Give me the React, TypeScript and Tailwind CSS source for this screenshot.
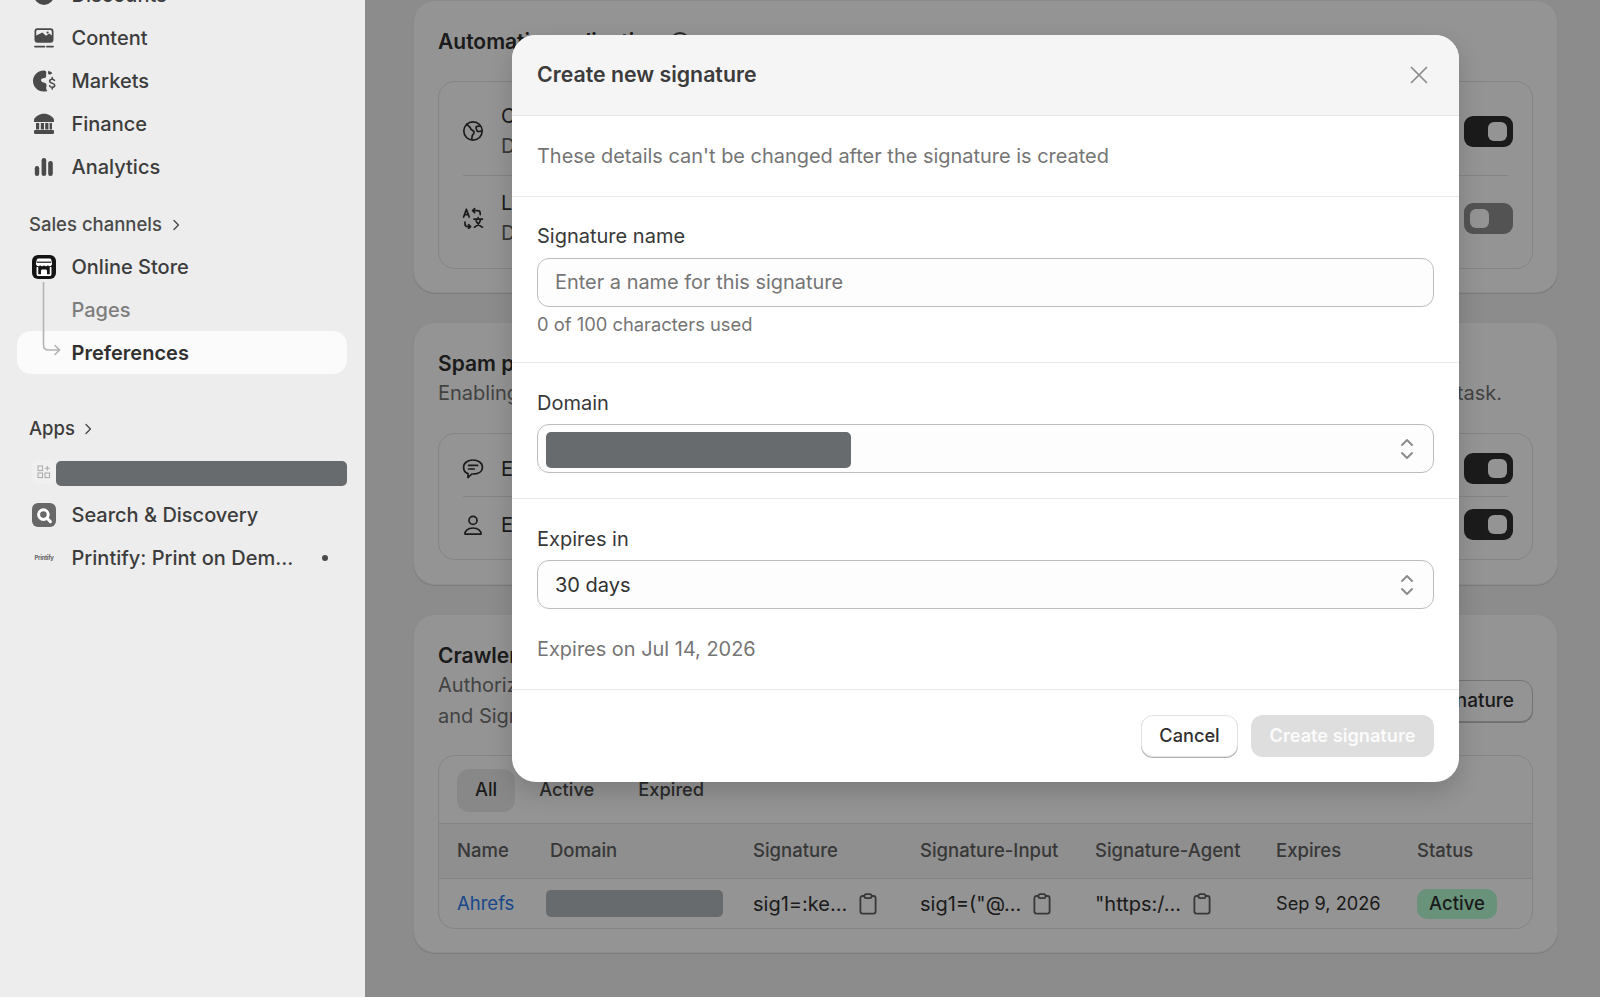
const redacted = 'bg-[#686b6d] rounded-[5px]'

function ContentIcon() {
  return (
    <svg viewBox="0 0 22 22" className="w-[22px] h-[22px]" fill="none">
      <rect x="1.5" y="1.2" width="19" height="14.6" rx="3" fill="#4a4a4a" />
      <path d="M3.2 8.6V4.6c0-1 .7-1.7 1.7-1.7h12.2c1 0 1.7.7 1.7 1.7v3.9l-2.6-1.9-3.2 2.2-3.6-3.3z" fill="#ededed" />
      <circle cx="14.6" cy="5.6" r="1.1" fill="#4a4a4a" />
      <path d="M2 19.6h9.5M14 19.6h6" stroke="#4a4a4a" strokeWidth="1.8" strokeLinecap="round" />
    </svg>
  )
}

function MarketsIcon() {
  return (
    <svg viewBox="0 0 24 24" className="w-[24px] h-[24px]" fill="none">
      <path d="M12.5 1.4C6.4 1 1.2 5.6 1 11.6c-.2 6.2 4.6 11 10.8 11 1.6 0 2.6-.2 3.6-.6-1.2-1.4-1.5-3-1-4.6.3-1 .3-2.4-.8-3.2-1.2-.9-3.2-.7-4.2-2-.8-1-.3-2.4.9-2.8 1.3-.5 3-.1 3.7-1.4.6-1.2-.3-2.2.2-3.4.2-.6.3-2-.7-2.6z" fill="#4a4a4a" />
      <path d="M16.5 1.8c1.4.4 2.8 1.2 3.8 2.4-1 .8-2 1.4-3 1.4-1.4 0-1.6-2.4-.8-3.8z" fill="#4a4a4a" />
      <path d="M22.4 11.4c-.4-.8-1.2-1.2-2.2-1.2-1.4 0-2.5.8-2.5 2 0 2.6 5 1.4 5 4 0 1.2-1.2 2-2.6 2-1.1 0-2.1-.5-2.5-1.4M20.2 8.6v1.6M20.2 18.2v1.8" stroke="#4a4a4a" strokeWidth="1.6" strokeLinecap="round" />
    </svg>
  )
}

function FinanceIcon() {
  return (
    <svg viewBox="0 0 22 22" className="w-[22px] h-[22px]" fill="none">
      <path d="M11 .8C6.5.8 2.6 3.2 1 6.6V9h20V6.6C19.4 3.2 15.5.8 11 .8z" fill="#4a4a4a" />
      <path d="M3 10h3.2v6.6H3zM7.8 10H11v6.6H7.8zM12.2 10h3.2v6.6h-3.2zM16.6 10H19v6.6h-2.4z" fill="#4a4a4a" />
      <rect x="1" y="17" width="20" height="4" rx="1.2" fill="#4a4a4a" />
    </svg>
  )
}

function AnalyticsIcon() {
  return (
    <svg viewBox="0 0 22 22" className="w-[22px] h-[22px]" fill="#4a4a4a">
      <rect x="1.8" y="10" width="4.4" height="10" rx="2.2" />
      <rect x="8.6" y="2" width="4.6" height="18" rx="2.3" />
      <rect x="15.2" y="5" width="4.6" height="15" rx="2.2" />
    </svg>
  )
}

function StoreIcon() {
  return (
    <svg viewBox="0 0 24 24" className="w-[24px] h-[24px]" fill="none">
      <rect width="24" height="24" rx="6" fill="#141414" />
      <path d="M6.5 3.6h11c1 0 1.7.6 1.9 1.5l.7 3.5c.2 1.4-.9 2.6-2.3 2.6-.8 0-1.5-.4-1.9-1-.4.6-1.1 1-1.9 1s-1.5-.4-2-1c-.4.6-1.1 1-1.9 1s-1.5-.4-1.9-1c-.4.6-1.1 1-1.9 1-1.4 0-2.5-1.2-2.3-2.6l.7-3.5c.2-.9.9-1.5 1.8-1.5z" fill="#fff" />
      <path d="M4.8 7.2h14.4" stroke="#141414" strokeWidth="1.2" />
      <path d="M5.4 12v7.2c0 .6.4 1 1 1h11.2c.6 0 1-.4 1-1V12" stroke="#fff" strokeWidth="1.7" />
      <path d="M9 20v-4.2c0-.8.6-1.4 1.4-1.4h3.2c.8 0 1.4.6 1.4 1.4V20" fill="#fff" />
    </svg>
  )
}

function SearchAppIcon() {
  return (
    <svg viewBox="0 0 24 24" className="w-[24px] h-[24px]" fill="none">
      <rect width="24" height="24" rx="6" fill="#686868" />
      <circle cx="11.4" cy="11.6" r="4.8" stroke="#fff" strokeWidth="3" />
      <path d="M15 15.2l3.4 3.4" stroke="#fff" strokeWidth="3" strokeLinecap="round" />
    </svg>
  )
}

function AppsIcon() {
  return (
    <div className="w-[24px] h-[24px] rounded-[5px] bg-[#f0f0f0] flex items-center justify-center">
      <svg viewBox="0 0 14 14" className="w-[14px] h-[14px]" fill="none" stroke="#a8a8a8" strokeWidth="1">
        <rect x="1" y="1" width="4.6" height="4.6" />
        <rect x="1" y="8" width="4.6" height="4.6" />
        <rect x="8" y="8" width="4.6" height="4.6" />
        <path d="M10.3 1v4.6M8 3.3h4.6" />
      </svg>
    </div>
  )
}

function Chevron() {
  return (
    <svg viewBox="0 0 10 12" className="w-[10px] h-[12px]" fill="none" stroke="#4a4a4a" strokeWidth="1.4" strokeLinecap="round" strokeLinejoin="round">
      <path d="M3 1.6 7.4 6 3 10.4" />
    </svg>
  )
}

function UpDown() {
  return (
    <svg viewBox="0 0 14 24" className="w-[14px] h-[24px]" fill="none" stroke="#8a8a8a" strokeWidth="1.9" strokeLinecap="round" strokeLinejoin="round">
      <path d="M2 8 7 3l5 5M2 16l5 5 5-5" />
    </svg>
  )
}

function NavRow({ icon, label, className = '' }: { icon?: React.ReactNode; label: string; className?: string }) {
  return (
    <div className={`h-[43px] flex items-center px-[15px] ${className}`}>
      <div className="w-[24px] flex justify-center shrink-0">{icon}</div>
      <span className="ml-[15.5px] text-[20px] font-[500] text-[#3c3c3c] whitespace-nowrap">{label}</span>
    </div>
  )
}

function Sidebar() {
  return (
    <aside className="w-[365px] shrink-0 h-full overflow-hidden bg-[#ededed] pl-[17px] pr-[18px]">
      <div className="-mt-[27px]">
        <NavRow label="Discounts" icon={<div className="w-[20px] h-[20px] rounded-full bg-[#4a4a4a]" />} />
        <NavRow label="Content" icon={<ContentIcon />} />
        <NavRow label="Markets" icon={<MarketsIcon />} />
        <NavRow label="Finance" icon={<FinanceIcon />} />
        <NavRow label="Analytics" icon={<AnalyticsIcon />} />
      </div>

      <div className="mt-[16px] h-[41px] flex items-center gap-[9px] px-[12px] text-[18.5px] font-[500] text-[#4a4a4a]">
        <span>Sales channels</span>
        <Chevron />
      </div>

      <div className="relative">
        <NavRow label="Online Store" icon={<StoreIcon />} />
        <div className="h-[43px] flex items-center pl-[54.5px] text-[20px] font-[500] text-[#7d7d7d]">Pages</div>
        <div className="h-[43px] flex items-center pl-[54.5px] text-[20px] font-[580] text-[#303030] bg-[#fbfbfb] rounded-[14px]">Preferences</div>
        {/* line from store icon down to the selected item */}
        <svg className="absolute left-[25px] top-[37px] w-[22px] h-[76px]" viewBox="0 0 22 76" fill="none" stroke="#b4b4b4" strokeWidth="1.6" strokeLinecap="round" strokeLinejoin="round">
          <path d="M1.5 0v63c0 3 2 5 5 5h11M13 63.5l4.6 4.5-4.6 4.5" />
        </svg>
      </div>

      <div className="mt-[33px] h-[43px] flex items-center gap-[8px] px-[12px] text-[18.5px] font-[500] text-[#3c3c3c]">
        <span>Apps</span>
        <Chevron />
      </div>

      <div className="h-[43px] flex items-center pl-[15px]">
        <AppsIcon />
        <div className={`flex-1 h-[25px] mt-[4px] ${redacted}`} />
      </div>
      <NavRow label="Search & Discovery" icon={<SearchAppIcon />} />
      <div className="h-[43px] flex items-center px-[15px]">
        <div className="w-[24px] text-center text-[6px] font-[700] text-[#666] tracking-tighter shrink-0">Printify</div>
        <span className="ml-[15.5px] text-[20px] font-[500] text-[#3c3c3c] whitespace-nowrap">Printify: Print on Dem...</span>
        <div className="ml-[29px] w-[6px] h-[6px] rounded-full bg-[#4a4a4a]" />
      </div>
    </aside>
  )
}

function Toggle({ on }: { on: boolean }) {
  return (
    <div className={`w-[49px] h-[31px] rounded-[9px] flex items-center px-[6px] ${on ? 'bg-[#303030] justify-end' : 'bg-[#8f8f8f] justify-start'}`}>
      <div className="w-[19px] h-[19px] rounded-[6px] bg-white" />
    </div>
  )
}

function SettingRow({ icon, title, sub, on, h }: { icon: React.ReactNode; title: string; sub?: string; on: boolean; h: string }) {
  return (
    <div className={`${h} flex items-center pl-[23px] pr-[19px]`}>
      <div className="w-[22px] flex justify-center shrink-0">{icon}</div>
      <div className="ml-[17px] flex-1 text-[20px] text-[#303030] leading-[30px]">
        <div>{title}</div>
        {sub && <div className="text-[#616161]">{sub}</div>}
      </div>
      <Toggle on={on} />
    </div>
  )
}

const stroke = { fill: 'none', stroke: '#303030', strokeWidth: 1.7, strokeLinecap: 'round', strokeLinejoin: 'round' } as const

function Card({ children, className = '' }: { children: React.ReactNode; className?: string }) {
  return <section className={`bg-white rounded-[22px] border border-[#f0f0f0] shadow-[0_1px_1px_rgba(0,0,0,0.12)] px-[24px] ${className}`}>{children}</section>
}

function Inner({ children }: { children: React.ReactNode }) {
  return <div className="border border-[#e3e3e3] rounded-[17px] overflow-hidden">{children}</div>
}

function Background() {
  return (
    <div className="h-full overflow-hidden bg-[#f1f1f1] pl-[48px] pr-[42px] text-[20px]">
      <Card className="pt-[29px] pb-[23px]">
        <div className="flex items-center gap-[10px] h-[24px]">
          <h2 className="font-[600] text-[21px] text-[#303030]">Automatic application</h2>
          <div className="w-[20px] h-[20px] rounded-full border-2 border-[#4a4a4a]" />
        </div>
        <div className="mt-[27px]">
          <Inner>
            <SettingRow
              h="h-[93px] pt-[5px]"
              on
              title="Crawlers and search"
              sub="Detect automatically"
              icon={
                <svg viewBox="0 0 22 22" className="w-[22px] h-[22px]" {...stroke}>
                  <circle cx="11" cy="11" r="9.2" />
                  <path d="M4.8 4.2 8 7.4c.6.6.4 1.2.9 1.8l2.8 2c.8.6.6 1.4.1 2.2l-1.6 2.4-.4 3.2M18.5 6l-3.4.4c-1 .2-1.2 1-1 1.8l.8 2.4c.3.9 1 1 1.8.9l2.6-.4" />
                </svg>
              }
            />
            <div className="mx-[24px] border-t border-[#e3e3e3]" />
            <SettingRow
              h="h-[92px] pb-[8px]"
              on={false}
              title="Language redirects"
              sub="Detect automatically"
              icon={
                <svg viewBox="0 0 22 22" className="w-[22px] h-[22px]" {...stroke}>
                  <path d="M1.6 10 4.4 2.2 7.2 10M2.6 7.6h3.6" />
                  <path d="M12.6 1.6 10.6 3.6l2 2M10.6 3.6h5c1.6 0 2.6 1 2.6 2.6v1.4" />
                  <path d="M6.6 17.6l2 2-2 2M8.6 19.6h-3c-1.6 0-2.6-1-2.6-2.6v-2" />
                  <path d="M12 12.2h8.4M16.2 10.6v1.6M18.6 12.2c-.6 3.6-3 6.4-6.2 8M13.8 12.2c.6 3.6 3 6.4 6.6 8" />
                </svg>
              }
            />
          </Inner>
        </div>
      </Card>

      <Card className="mt-[29px] pt-[29px] pb-[24px]">
        <h2 className="font-[600] text-[21px] text-[#303030] h-[24px] leading-[24px]">Spam protection</h2>
        <div className="mt-[5px] h-[24px] leading-[24px] flex justify-between pr-[31px] text-[#737373]">
          <span>Enabling spam protection</span>
          <span>task.</span>
        </div>
        <div className="mt-[28px]">
          <Inner>
            <SettingRow
              h="h-[62px] pt-[7px]"
              on
              title="Enable on comments"
              icon={
                <svg viewBox="0 0 22 22" className="w-[22px] h-[22px]" {...stroke}>
                  <path d="M11 2c5.2 0 9.4 2.8 9.4 7.2S16.2 16 11 16h-1.2L6 19.6V15.6C3 14.6 1.6 12.2 1.6 9.2 1.6 4.8 5.8 2 11 2z" />
                  <path d="M6.6 7.4h9M6.6 11h5.6" />
                </svg>
              }
            />
            <div className="mx-[24px] border-t border-[#e3e3e3]" />
            <SettingRow
              h="h-[62px] pb-[7px]"
              on
              title="Enable on customer accounts"
              icon={
                <svg viewBox="0 0 22 22" className="w-[22px] h-[22px]" {...stroke}>
                  <circle cx="11" cy="6.4" r="4" />
                  <path d="M3 20.2h16c.4-3.4-3-6.2-8-6.2s-8.4 2.8-8 6.2z" />
                </svg>
              }
            />
          </Inner>
        </div>
      </Card>

      <Card className="mt-[29px] pt-[29px] pb-[23px]">
        <div className="flex justify-between items-start">
          <div>
            <h2 className="font-[600] text-[21px] text-[#303030] h-[24px] leading-[24px]">Crawler access</h2>
            <p className="mt-[2px] text-[#737373] leading-[31px]">
              Authorize crawlers
              <br />
              and Signature-Agent
            </p>
          </div>
          <div className="mt-[36px] h-[42px] pl-[20px] pr-[18px] flex items-center rounded-[12px] border border-[#c9c9c9] bg-white font-[500] text-[19px] text-[#303030] shadow-[0_1px_0_rgba(0,0,0,0.25)]">
            Create signature
          </div>
        </div>

        <div className="mt-[23px]">
          <Inner>
            <div className="h-[68px] px-[18px] pt-[1px] flex items-center gap-[6px] border-b border-[#e3e3e3] font-[500] text-[18.3px]">
              <div className="h-[43px] px-[18px] flex items-center rounded-[12px] bg-[#ebebeb] text-[#303030]">All</div>
              <div className="h-[43px] px-[18px] flex items-center text-[#4a4a4a]">Active</div>
              <div className="h-[43px] px-[20px] flex items-center text-[#4a4a4a]">Expired</div>
            </div>
            <div className="h-[55px] pl-[18px] grid grid-cols-[93px_203px_167px_175px_181px_141px_1fr] items-center border-b border-[#e3e3e3] bg-[#f7f7f7] text-[#616161] font-[500] text-[18.5px]">
              <span>Name</span>
              <span>Domain</span>
              <span>Signature</span>
              <span>Signature-Input</span>
              <span>Signature-Agent</span>
              <span>Expires</span>
              <span>Status</span>
            </div>
            <div className="h-[49px] pl-[18px] grid grid-cols-[93px_203px_167px_175px_181px_141px_1fr] items-center text-[#303030]">
              <span className="text-[#2a7cf0] text-[18.5px]">Ahrefs</span>
              <span className="-ml-[4px] w-[177px] h-[27px] rounded-[5px] bg-[#b3b8bc]" />
              <span className="flex items-center gap-[12px]">
                sig1=:ke...
                <Clip />
              </span>
              <span className="flex items-center gap-[12px]">
                sig1=("@...
                <Clip />
              </span>
              <span className="flex items-center gap-[12px]">
                "https:/...
                <Clip />
              </span>
              <span className="text-[18.2px]">Sep 9, 2026</span>
              <span className="w-[80px] h-[30px] rounded-[10px] bg-[#b4fed2] flex items-center justify-center font-[500] text-[18.5px]">Active</span>
            </div>
          </Inner>
        </div>
      </Card>
    </div>
  )
}

function Clip() {
  return (
    <svg viewBox="0 0 18 22" className="w-[18px] h-[22px] shrink-0" fill="none" stroke="#616161" strokeWidth="1.8" strokeLinejoin="round">
      <path d="M5.5 3H3.4C2.2 3 1.4 3.8 1.4 5v13.6c0 1.2.8 2 2 2h11.2c1.2 0 2-.8 2-2V5c0-1.2-.8-2-2-2h-2.1" />
      <rect x="5.5" y="1.2" width="7" height="4" rx="1.6" />
    </svg>
  )
}

function SelectBox({ children }: { children: React.ReactNode }) {
  return (
    <div className="h-[49px] rounded-[12px] border border-[#bdbdbd] bg-[#fdfdfd] flex items-center justify-between pr-[19px]">
      {children}
      <UpDown />
    </div>
  )
}

function Modal() {
  return (
    <div className="absolute left-[147px] top-[35px] w-[947px] h-[747px] rounded-[24px] bg-white overflow-hidden shadow-[0_10px_24px_rgba(0,0,0,0.16)] flex flex-col text-[20px]">
      <div className="h-[81px] shrink-0 bg-[#f5f5f5] border-b border-[#e6e6e6] flex items-center justify-between pl-[25px] pr-[31px]">
        <h1 className="text-[21.3px] font-[600] text-[#3c3c3c]">Create new signature</h1>
        <svg viewBox="0 0 18 18" className="w-[18px] h-[18px]" fill="none" stroke="#8a8a8a" strokeWidth="1.7" strokeLinecap="round">
          <path d="M1.5 1.5l15 15M16.5 1.5l-15 15" />
        </svg>
      </div>

      <div className="h-[81px] shrink-0 border-b border-[#ebebeb] flex items-center px-[25px] pt-[2px] text-[19.95px] text-[#757575]">
        These details can't be changed after the signature is created
      </div>

      <div className="h-[166px] shrink-0 border-b border-[#ebebeb] px-[25px] pt-[27px]">
        <div className="h-[24px] leading-[24px] text-[#383838]">Signature name</div>
        <div className="mt-[10px] h-[49px] rounded-[12px] border border-[#bdbdbd] bg-[#fdfdfd] flex items-center pl-[17px] text-[19.95px] text-[#757575]">
          Enter a name for this signature
        </div>
        <div className="mt-[5px] h-[24px] leading-[24px] text-[18.35px] text-[#757575]">0 of 100 characters used</div>
      </div>

      <div className="h-[136px] shrink-0 border-b border-[#ebebeb] px-[25px] pt-[28px]">
        <div className="h-[24px] leading-[24px] text-[#383838]">Domain</div>
        <div className="mt-[9px]">
          <SelectBox>
            <div className={`ml-[8px] mt-[2px] w-[305px] h-[36px] ${redacted}`} />
          </SelectBox>
        </div>
      </div>

      <div className="h-[191px] shrink-0 border-b border-[#ebebeb] px-[25px] pt-[28px]">
        <div className="h-[24px] leading-[24px] text-[#383838]">Expires in</div>
        <div className="mt-[9px]">
          <SelectBox>
            <span className="pl-[17px] text-[#303030]">30 days</span>
          </SelectBox>
        </div>
        <div className="mt-[28px] h-[24px] leading-[24px] text-[19.95px] text-[#757575]">Expires on Jul 14, 2026</div>
      </div>

      <div className="flex-1 flex justify-end items-center gap-[13px] px-[25px]">
        <div className="h-[42px] w-[97px] rounded-[12px] border border-[#e3e3e3] bg-white flex items-center justify-center font-[500] text-[18.2px] text-[#303030] shadow-[0_1px_0_rgba(0,0,0,0.3)]">
          Cancel
        </div>
        <div className="h-[42px] w-[183px] rounded-[12px] bg-[#dedede] flex items-center justify-center font-[600] text-[18.2px] text-[#fbfbfb]">
          Create signature
        </div>
      </div>
    </div>
  )
}

export default function App() {
  return (
    <div className="h-[997px] w-[1600px] flex overflow-hidden font-[Inter,sans-serif]">
      <Sidebar />
      <main className="relative flex-1 h-full overflow-hidden">
        <Background />
        <div className="absolute inset-0 bg-black/[0.42]" />
        <Modal />
      </main>
    </div>
  )
}
